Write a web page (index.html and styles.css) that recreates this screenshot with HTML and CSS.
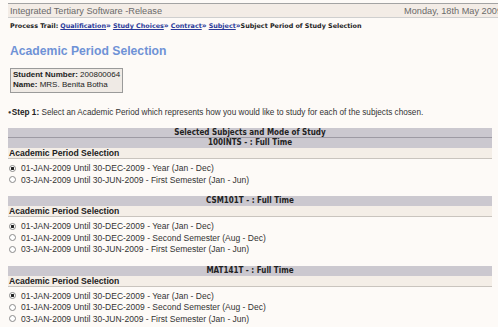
FILE: index.html
```html
<!DOCTYPE html>
<html>
<head>
<meta charset="utf-8">
<link rel="stylesheet" href="styles.css">
</head>
<body>
<div class="page">
  <div class="topbar">
    <span class="app">Integrated Tertiary Software -Release</span>
    <span class="date">Monday, 18th May 2009</span>
  </div>
  <div class="trail">
    <b>Process Trail:</b>
    <a href="#">Qualification</a><span class="sep">»</span>
    <a href="#">Study Choices</a><span class="sep">»</span>
    <a href="#">Contract</a><span class="sep">»</span>
    <a href="#">Subject</a><span class="sep">»</span><b>Subject Period of Study Selection</b>
  </div>
  <h1 class="title">Academic Period Selection</h1>
  <div class="student">
    <div><b>Student Number:</b> 200800064</div>
    <div><b>Name:</b> MRS. Benita Botha</div>
  </div>
  <p class="step"><span class="bullet">●</span><b>Step 1:</b> Select an Academic Period which represents how you would like to study for each of the subjects chosen.</p>

  <div class="subjects">
    <div class="head">Selected Subjects and Mode of Study</div>

    <div class="block">
      <div class="subj first">100INTS - : Full Time</div>
      <div class="aps">Academic Period Selection</div>
      <div class="opts">
        <label class="opt"><input type="radio" name="s1" checked> 01-JAN-2009 Until 30-DEC-2009 - Year (Jan - Dec)</label>
        <label class="opt"><input type="radio" name="s1"> 03-JAN-2009 Until 30-JUN-2009 - First Semester (Jan - Jun)</label>
      </div>
    </div>

    <div class="block">
      <div class="subj">CSM101T - : Full Time</div>
      <div class="aps">Academic Period Selection</div>
      <div class="opts">
        <label class="opt"><input type="radio" name="s2" checked> 01-JAN-2009 Until 30-DEC-2009 - Year (Jan - Dec)</label>
        <label class="opt"><input type="radio" name="s2"> 01-JAN-2009 Until 30-DEC-2009 - Second Semester (Aug - Dec)</label>
        <label class="opt"><input type="radio" name="s2"> 03-JAN-2009 Until 30-JUN-2009 - First Semester (Jan - Jun)</label>
      </div>
    </div>

    <div class="block">
      <div class="subj">MAT141T - : Full Time</div>
      <div class="aps">Academic Period Selection</div>
      <div class="opts">
        <label class="opt"><input type="radio" name="s3" checked> 01-JAN-2009 Until 30-DEC-2009 - Year (Jan - Dec)</label>
        <label class="opt"><input type="radio" name="s3"> 01-JAN-2009 Until 30-DEC-2009 - Second Semester (Aug - Dec)</label>
        <label class="opt"><input type="radio" name="s3"> 03-JAN-2009 Until 30-JUN-2009 - First Semester (Jan - Jun)</label>
      </div>
    </div>
  </div>
</div>
</body>
</html>
```

FILE: styles.css
```css
html, body {
  margin: 0;
  padding: 0;
  background: #fdfaf7;
  overflow: hidden;
}
body {
  font-family: "Liberation Sans", Arial, sans-serif;
  color: #333;
}
.page {
  padding: 3px 0 0 8px;
}
.topbar {
  width: 496px;
  height: 15px;
  box-sizing: border-box;
  border-top: 1px solid #a3a3a3;
  border-bottom: 1px solid #cfcfcf;
  background: #f3ece6;
  display: flex;
  justify-content: space-between;
  align-items: center;
  padding: 0 2px;
  font-size: 9.2px;
  color: #6a6a6a;
  white-space: nowrap;
}
.trail {
  margin-top: 3px;
  padding-left: 2px;
  font-family: "DejaVu Sans", Verdana, sans-serif;
  font-size: 6.4px;
  line-height: 10px;
  color: #222;
  white-space: nowrap;
}
.trail b { font-weight: bold; }
.trail a {
  color: #2b3a9a;
  font-weight: bold;
  text-decoration: underline;
}
.trail .sep {
  color: #2b3a9a;
  font-weight: bold;
  font-size: 7.5px;
}
.title {
  margin: 12px 0 0 2px;
  font-size: 12.2px;
  line-height: 16px;
  font-weight: bold;
  color: #6f92d6;
}
.student {
  margin: 9px 0 0 2px;
  width: 113px;
  box-sizing: border-box;
  border: 1px solid #9a9a9a;
  background: #efeae5;
  padding: 1px 1px 2px 2px;
  font-size: 8px;
  line-height: 10px;
  color: #222;
  white-space: nowrap;
}
.student b { color: #222; }
.step {
  margin: 14px 0 0 0;
  font-size: 8.2px;
  line-height: 10px;
  color: #333;
  white-space: nowrap;
}
.step b { color: #222; }
.bullet {
  font-size: 5.5px;
  vertical-align: 1px;
  margin-right: 0.5px;
}
.subjects {
  margin-top: 10px;
  width: 484px;
}
.head, .subj {
  background: #cbc8cf;
  text-align: center;
  font-family: "DejaVu Sans Condensed", "DejaVu Sans", sans-serif;
  font-weight: bold;
  font-size: 8px;
  color: #222;
  height: 10px;
  line-height: 10px;
}
.head {
  border-bottom: 1px solid #9d9aa3;
  height: 9px;
  line-height: 9px;
}
.aps {
  background: #f4eee7;
  border-bottom: 1px solid #c9c4be;
  height: 10px;
  line-height: 11px;
  padding-left: 1px;
  font-weight: bold;
  font-size: 8.6px;
  color: #222;
}
.opts {
  padding: 3.5px 0 0 0;
}
.block + .block {
  margin-top: 10.5px;
}
.opt {
  display: flex;
  align-items: center;
  height: 11.5px;
  padding-left: 1px;
  color: #333;
  font-size: 8.5px;
  white-space: nowrap;
}
.opt input {
  appearance: none;
  -webkit-appearance: none;
  width: 7px;
  height: 7px;
  margin: 0 5px 0 0;
  border: 1px solid #8a8a8a;
  border-radius: 50%;
  background: #fff;
  box-sizing: border-box;
  flex: none;
}
.opt input:checked {
  background: radial-gradient(circle, #222 0 1.4px, #fff 1.6px);
}
```
